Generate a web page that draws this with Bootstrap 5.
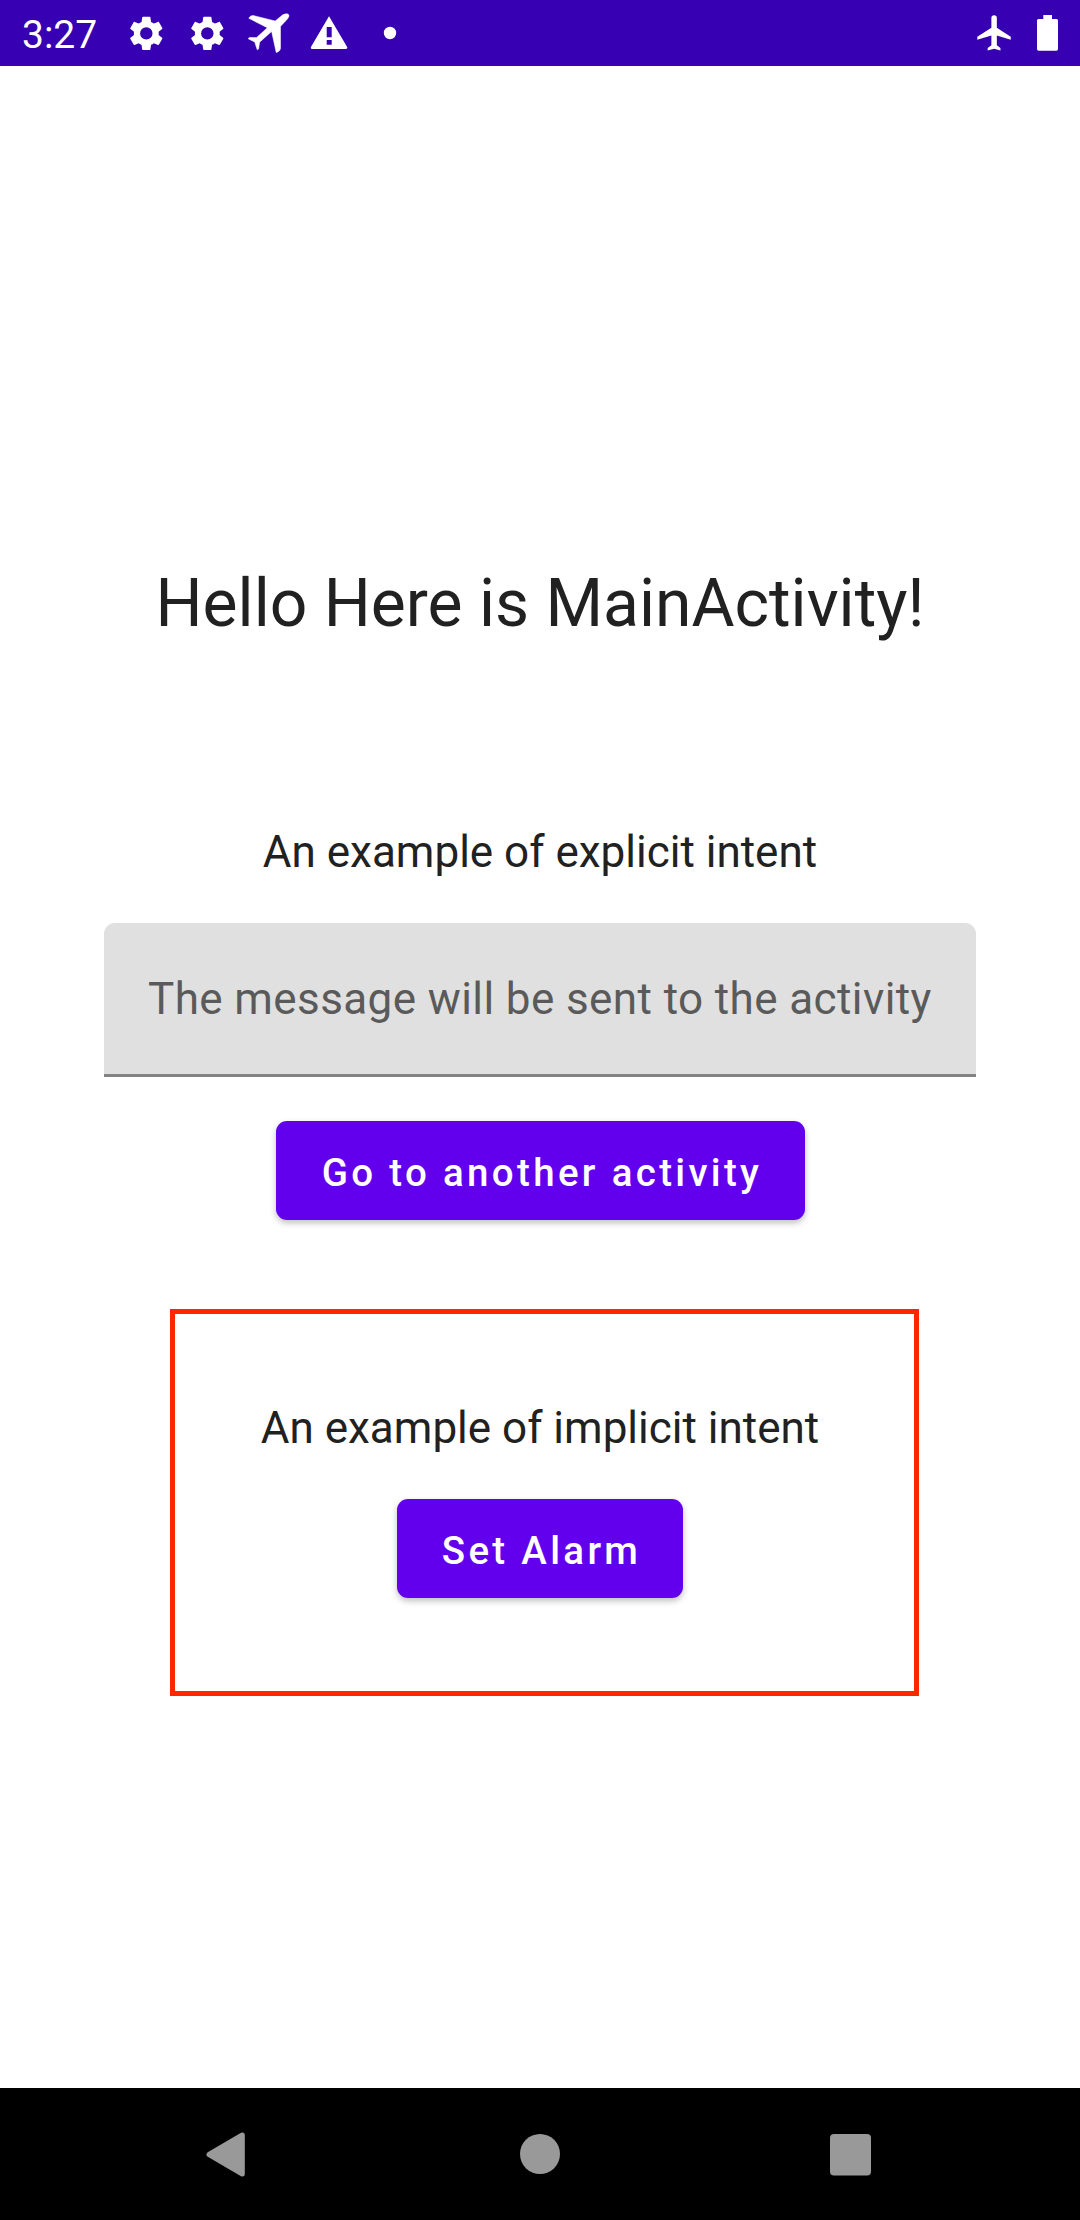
<!DOCTYPE html>
<html lang="en">
<head>
<meta charset="utf-8">
<meta name="viewport" content="width=device-width, initial-scale=1">
<title>MainActivity</title>
<link href="https://cdn.jsdelivr.net/npm/bootstrap@5.3.0/dist/css/bootstrap.min.css" rel="stylesheet">
<style>
  body { font-family: Roboto, sans-serif; color: #212121; background: #fff; }
  .screen { width: 1080px; height: 2220px; }
  .status-bar { height: 66px; background: #3700b3; padding: 0 20px 0 22px; }
  .status-bar svg, .system-nav svg { display: block; flex: none; }
  .clock { font-size: 39px; line-height: 66px; padding-top: 3px; width: 105px; }
  .headline { font-size: 66px; line-height: 78px; margin: 499px 0 0; font-weight: 400; }
  .caption { font-size: 44px; line-height: 52px; margin: 0; }
  .explicit { margin-top: 183px; }
  .message-field { width: 872px; height: 154px; margin-top: 45px; padding: 0 44px; border: 0;
    border-bottom: 3px solid #838383; border-radius: 11px 11px 0 0; background: #e0e0e0;
    font-size: 44px; letter-spacing: .4px; }
  .message-field::placeholder { color: #5a5a5a; opacity: 1; }
  .btn-action { --bs-btn-color: #fff; --bs-btn-bg: #6200ee; --bs-btn-hover-color: #fff; --bs-btn-hover-bg: #5600d6;
    height: 99px; padding: 5px 0 0; border: 0; border-radius: 11px; font-size: 38.5px; line-height: 94px;
    font-weight: 500; letter-spacing: 3.32px; text-indent: 4px; box-shadow: 0 3px 6px rgba(0,0,0,.25); }
  .btn-go { width: 529px; margin-top: 44px; }
  .btn-alarm { width: 286px; margin-top: 45px; text-indent: 3px; }
  .highlight { width: 749px; height: 387px; margin: 88.5px 0 0 8px; padding: 88.5px 8px 0 0; border: 5px solid #ff2600; }
  .system-nav { height: 132px; }
</style>
</head>
<body>
<div class="screen d-flex flex-column overflow-hidden">
  <header class="status-bar d-flex align-items-center text-white">
    <span class="clock">3:27</span>
    <!-- notification icons -->
    <svg width="320" height="66" viewBox="127 0 320 66" fill="#fff">
      <g id="gear" transform="translate(125.6 12.7) scale(1.725)"><path d="M19.14 12.94c.04-.3.06-.61.06-.94s-.02-.64-.07-.94l2.03-1.58c.18-.14.23-.41.12-.61l-1.92-3.32c-.12-.22-.37-.29-.59-.22l-2.39.96c-.5-.38-1.03-.7-1.62-.94l-.36-2.54c-.04-.24-.24-.41-.48-.41h-3.84c-.24 0-.43.17-.47.41l-.36 2.54c-.59.24-1.13.57-1.62.94l-2.39-.96c-.22-.08-.47 0-.59.22L2.74 8.87c-.12.21-.08.47.12.61l2.03 1.58c-.05.3-.09.63-.09.94s.02.64.07.94l-2.03 1.58c-.18.14-.23.41-.12.61l1.92 3.32c.12.22.37.29.59.22l2.39-.96c.5.38 1.03.7 1.62.94l.36 2.54c.05.24.24.41.48.41h3.84c.24 0 .44-.17.47-.41l.36-2.54c.59-.24 1.13-.56 1.62-.94l2.39.96c.22.08.47 0 .59-.22l1.92-3.32c.12-.22.07-.47-.12-.61zM12 15.6A3.6 3.6 0 1 1 12 8.4a3.6 3.6 0 0 1 0 7.2z"/></g>
      <use href="#gear" x="61"/>
      <path d="M288.3 14.3C286.6 13.2 283.4 14 281 16.2L275.2 21L253.5 15.6C251.5 15.3 249.5 16.5 248.8 18.3L267.3 27.8L256.6 37.6L249.3 37.4L248.2 38.8L254.7 42L257.2 49.8L258.6 49L259.6 42.2L271.6 31.5L276.2 52.5C278.5 52 280.3 50.3 280.5 48.5V26.4L286.3 20.2C288.8 17.7 289.7 15.3 288.3 14.3Z" stroke="#fff" stroke-width=".5" stroke-linejoin="round"/>
      <path fill-rule="evenodd" d="M329 16.3L347.3 47.3Q347.5 49 346 49H312Q310.5 49 310.8 47.3ZM326.7 27V37.3H331.7V27ZM326.7 40V44.7H331.7V40Z"/>
      <circle cx="390" cy="33" r="6.2"/>
    </svg>
    <!-- airplane mode and battery -->
    <svg class="ms-auto" width="90" height="66" viewBox="970 0 90 66" fill="#fff">
      <g transform="translate(972.9 11.8) scale(1.76)"><path d="M21.5 15.9V14.2L13.6 9V3.5a1.5 1.5 0 0 0-3.1 0V9L2.5 14.2v1.7l8-2.4V19l-2.1 1.6V22l3.65-1 3.6 1v-1.4L13.6 19v-5.5z"/></g>
      <path d="M1043.3 15H1052V19H1056.5Q1058 19 1058 20.5V49Q1058 50.7 1056.5 50.7H1038.7Q1037 50.7 1037 49V20.5Q1037 19 1038.5 19H1043.3Z"/>
    </svg>
  </header>

  <main class="flex-grow-1 d-flex flex-column align-items-center text-nowrap">
    <h1 class="headline">Hello Here is MainActivity!</h1>
    <p class="caption explicit">An example of explicit intent</p>
    <input class="message-field" type="text" placeholder="The message will be sent to the activity" aria-label="Message">
    <button type="button" class="btn btn-action btn-go">Go to another activity</button>
    <section class="highlight d-flex flex-column align-items-center">
      <p class="caption">An example of implicit intent</p>
      <button type="button" class="btn btn-action btn-alarm">Set Alarm</button>
    </section>
  </main>

  <footer class="system-nav bg-black flex-shrink-0">
    <svg width="1080" height="132" fill="#999">
      <path d="M209 66.5L242.3 47V86Z" stroke="#999" stroke-width="5" stroke-linejoin="round"/>
      <circle cx="540" cy="66" r="20"/>
      <rect x="830" y="46" width="41" height="41.5" rx="4"/>
    </svg>
  </footer>
</div>
<script src="https://cdn.jsdelivr.net/npm/bootstrap@5.3.0/dist/js/bootstrap.bundle.min.js"></script>
</body>
</html>
